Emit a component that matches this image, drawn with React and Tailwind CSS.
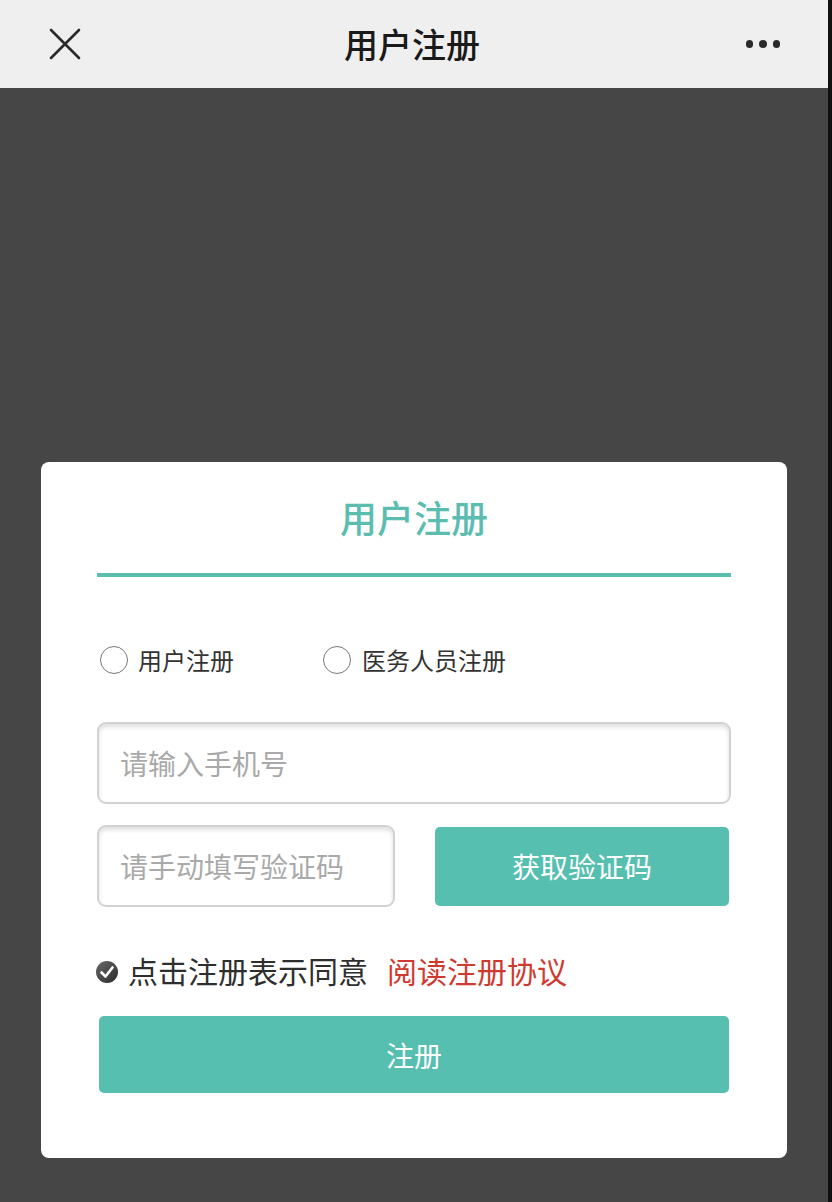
import React from "react";

const font = { fontFamily: '"Noto Sans CJK SC", "Noto Sans", sans-serif' };

function CheckIcon() {
  return (
    <svg width="24" height="24" viewBox="0 0 24 24">
      <defs>
        <linearGradient id="cg" x1="0" y1="0" x2="1" y2="1">
          <stop offset="0" stopColor="#6a6a6a" />
          <stop offset="1" stopColor="#2a2a2a" />
        </linearGradient>
      </defs>
      <circle cx="12" cy="12" r="11" fill="url(#cg)" />
      <path d="M6.5 12.5 L10.5 16.5 L17.5 7.5" stroke="#fff" strokeWidth="2.6" fill="none" strokeLinecap="round" strokeLinejoin="round" />
    </svg>
  );
}

export default function App() {
  return (
    <div className="flex w-[832px] h-[1202px] overflow-hidden" style={font}>
      <div className="flex flex-col w-[828px] h-full">
        <header className="h-[88px] bg-[#efefef] flex items-center justify-between px-[48px] shrink-0">
          <svg width="34" height="34" viewBox="0 0 34 34">
            <path d="M3 3 L31 31 M31 3 L3 31" stroke="#2a2a2a" strokeWidth="2.6" strokeLinecap="round" />
          </svg>
          <div className="text-[34px] leading-none font-medium text-[#1a1a1a] -ml-[4px]">用户注册</div>
          <div className="flex items-center gap-[6px] w-[34px] justify-end">
            <span className="w-[8px] h-[8px] rounded-full bg-[#2a2a2a]" />
            <span className="w-[8px] h-[8px] rounded-full bg-[#2a2a2a]" />
            <span className="w-[8px] h-[8px] rounded-full bg-[#2a2a2a]" />
          </div>
        </header>
        <main className="flex-1 bg-[#464646] flex flex-col">
          <div className="mt-[374px] mx-[41px] bg-white rounded-[8px] px-[56px] pt-[31px] pb-[65px] flex flex-col">
            <div className="h-[48px] leading-[48px] text-center text-[37px] font-medium text-[#5bbdaf]">用户注册</div>
            <div className="mt-[32px] h-[4px] bg-[#5dbdaf]" />
            <div className="mt-[63px] h-[40px] flex items-center">
              <div className="flex items-center ml-[3px]">
                <span className="w-[28px] h-[28px] rounded-full border-[1.5px] border-[#777]" />
                <span className="ml-[10px] text-[24px] leading-none text-[#333]">用户注册</span>
              </div>
              <div className="flex items-center ml-[89px]">
                <span className="w-[28px] h-[28px] rounded-full border-[1.5px] border-[#777]" />
                <span className="ml-[11px] text-[24px] leading-none text-[#333]">医务人员注册</span>
              </div>
            </div>
            <div className="mt-[42px] h-[82px] rounded-[9px] border-2 border-[#d2d2d2] shadow-[inset_0_3px_4px_rgba(0,0,0,0.13)] flex items-center pl-[21px]">
              <span className="text-[28px] leading-none text-[#a9a9a9]">请输入手机号</span>
            </div>
            <div className="mt-[21px] h-[82px] flex items-center justify-between">
              <div className="w-[298px] h-[82px] rounded-[9px] border-2 border-[#d2d2d2] shadow-[inset_0_3px_4px_rgba(0,0,0,0.13)] flex items-center pl-[21px]">
                <span className="text-[28px] leading-none text-[#a9a9a9]">请手动填写验证码</span>
              </div>
              <div className="w-[294px] h-[79px] mr-[2px] rounded-[5px] bg-[#57bfb0] flex items-center justify-center">
                <span className="text-[28px] leading-none text-white">获取验证码</span>
              </div>
            </div>
            <div className="mt-[43px] h-[40px] flex items-center">
              <span className="-ml-[2px] mt-[4px] flex"><CheckIcon /></span>
              <span className="ml-[9px] text-[30px] leading-none text-[#2e2e2e]">点击注册表示同意</span>
              <span className="ml-[19px] text-[30px] leading-none text-[#cf3a30]">阅读注册协议</span>
            </div>
            <div className="mt-[26px] mx-[2px] h-[77px] rounded-[5px] bg-[#57bfb0] flex items-center justify-center">
              <span className="text-[28px] leading-none text-white">注册</span>
            </div>
          </div>
        </main>
      </div>
      <div className="w-[4px] h-full bg-[#111]" />
    </div>
  );
}
